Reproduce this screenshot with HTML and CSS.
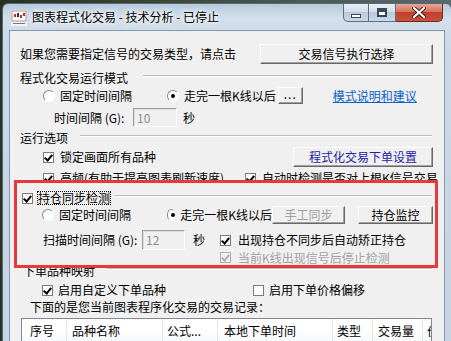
FILE: index.html
```html
<!DOCTYPE html>
<html lang="zh-CN">
<head>
  <meta charset="UTF-8">
  <title>图表程式化交易 - 技术分析 - 已停止</title>
  <link rel="stylesheet" href="styles.css">
</head>
<body>
  <div class="window">
    <div class="titlebar">
      <svg class="app-icon" width="16" height="16" viewBox="0 0 16 16">
        <rect x="0" y="0" width="16" height="16" fill="#f4f4f4"/>
        <rect x="1" y="1" width="14" height="10" fill="#fff" stroke="#9a9a9a" stroke-width="1"/>
        <rect x="3" y="4" width="2" height="3" fill="#d22"/>
        <rect x="6" y="3" width="2" height="4" fill="#333"/>
        <rect x="9" y="5" width="2" height="3" fill="#d22"/>
        <rect x="12" y="3" width="2" height="3" fill="#d22"/>
        <rect x="2" y="13" width="12" height="1" fill="#777"/>
      </svg>
      <span class="title">图表程式化交易 - 技术分析 - 已停止</span>
      <div class="caps">
        <div class="cap cap-min"><span class="min-glyph"></span></div>
        <div class="cap cap-max"><span class="max-glyph"></span></div>
        <div class="cap cap-close">
          <svg width="14" height="11" viewBox="0 0 14 11">
            <path d="M2 1 L12 10 M12 1 L2 10" stroke="#3a1a14" stroke-width="4" stroke-linecap="round"/>
            <path d="M2 1 L12 10 M12 1 L2 10" stroke="#fff" stroke-width="2.2" stroke-linecap="round"/>
          </svg>
        </div>
      </div>
    </div>

    <div class="client">
      <div class="row row-top">
        <span>如果您需要指定信号的交易类型，请点击</span>
        <div class="btn btn-signal">交易信号执行选择</div>
      </div>

      <div class="row group-title">
        <span>程式化交易运行模式</span>
        <span class="line line-wide"></span>
      </div>

      <div class="row row-mode">
        <label class="opt opt-first"><span class="radio"></span>固定时间间隔</label>
        <label class="opt"><span class="radio checked"></span>走完一根K线以后</label>
        <div class="btn btn-dots">...</div>
        <a class="link" href="#">模式说明和建议</a>
      </div>

      <div class="row row-interval">
        <span class="field-label">时间间隔 (G):</span>
        <div class="input">10</div>
        <span class="unit">秒</span>
      </div>

      <div class="row group-title">
        <span>运行选项</span>
        <span class="line"></span>
      </div>

      <div class="row row-lock">
        <label class="opt"><span class="check checked"></span>锁定画面所有品种</label>
        <div class="btn btn-order">程式化交易下单设置</div>
      </div>

      <div class="row row-freq">
        <label class="opt opt-freq"><span class="check checked"></span>高频(有助于提高图表刷新速度)</label>
        <label class="opt"><span class="check checked"></span>自动时检测是否对上根K信号交易</label>
      </div>

      <div class="row group-title row-sync">
        <span class="check checked"></span>
        <span class="focus">持仓同步检测</span>
        <span class="line line-tight"></span>
      </div>

      <div class="row row-sync-mode">
        <label class="opt opt-first"><span class="radio"></span>固定时间间隔</label>
        <label class="opt opt-bar"><span class="radio checked"></span>走完一根K线以后</label>
        <div class="btn btn-manual disabled">手工同步</div>
        <div class="btn btn-monitor">持仓监控</div>
      </div>

      <div class="row row-scan">
        <span class="field-label scan-label">扫描时间间隔 (G):</span>
        <div class="input input-scan">12</div>
        <span class="unit unit-scan">秒</span>
        <label class="opt"><span class="check checked"></span>出现持仓不同步后自动矫正持仓</label>
      </div>

      <div class="row row-stop">
        <label class="opt disabled"><span class="check checked"></span>当前K线出现信号后停止检测</label>
      </div>

      <div class="row group-title row-map">
        <span>下单品种映射</span>
        <span class="line"></span>
      </div>

      <div class="row row-custom">
        <label class="opt opt-custom"><span class="check checked"></span>启用自定义下单品种</label>
        <label class="opt"><span class="check"></span>启用下单价格偏移</label>
      </div>

      <div class="row row-note">
        <span>下面的是您当前图表程序化交易的交易记录：</span>
      </div>

      <div class="list">
        <div class="list-head">
          <div class="col col-no">序号</div>
          <div class="col col-name">品种名称</div>
          <div class="col col-formula">公式...</div>
          <div class="col col-time">本地下单时间</div>
          <div class="col col-type">类型</div>
          <div class="col col-qty">交易量</div>
          <div class="col col-price">价格</div>
        </div>
      </div>

      <div class="highlight"></div>
    </div>
  </div>
</body>
</html>
```

FILE: styles.css
```css
* {
  margin: 0;
  padding: 0;
  box-sizing: border-box;
}

body {
  width: 451px;
  height: 341px;
  overflow: hidden;
  background: linear-gradient(90deg, #27331f, #3d4a3a 40%, #5a6a6c);
  font-family: "Noto Sans CJK SC", "Noto Sans", sans-serif;
  font-size: 12px;
  line-height: 14px;
  color: #000;
}

.window {
  margin: 3px 0 0 2px;
  width: 450px;
  height: 338px;
  background: linear-gradient(#b8c9dc, #d3dfeb 14px, #cbd8e6 40px, #c6d4e3);
  border: 1px solid #55677d;
  border-bottom: none;
  border-radius: 6px 6px 0 0;
  overflow: hidden;
}

/* title bar */

.titlebar {
  height: 26px;
  display: flex;
  align-items: center;
  padding-left: 8px;
}

.app-icon {
  margin-right: 5px;
  margin-top: 1px;
}

.title {
  color: #000;
  font-size: 12px;
  text-shadow: 0 0 6px #fff, 0 0 4px #fff;
}

.caps {
  margin-left: auto;
  margin-right: 8px;
  align-self: flex-start;
  display: flex;
  height: 18px;
}

.cap {
  height: 18px;
  display: flex;
  align-items: center;
  justify-content: center;
  border: 1px solid #5d6f86;
  border-top: none;
  background: linear-gradient(#e8eef5, #d3deea 45%, #bccbdc 50%, #c9d7e6);
}

.cap-min {
  width: 26px;
  border-radius: 0 0 0 5px;
}

.cap-max {
  width: 27px;
  border-left: none;
}

.cap-close {
  width: 47px;
  border-left: none;
  border-color: #6a2a20;
  border-radius: 0 0 5px 0;
  background: linear-gradient(#e9a897, #d7725c 45%, #c2402a 50%, #c9503a);
}

.min-glyph {
  width: 10px;
  height: 4px;
  margin-top: 6px;
  background: #fff;
  border: 1px solid #38475a;
}

.max-glyph {
  width: 10px;
  height: 9px;
  border: 1px solid #38475a;
  border-top-width: 3px;
  background: #fff;
  box-shadow: inset 0 0 0 1px #38475a;
  background-clip: content-box;
  padding: 1px;
}

/* client area */

.client {
  position: relative;
  margin: 0 6px;
  height: 330px;
  background: #f0f0f0;
  border: 1px solid #8597ad;
}

.row {
  display: flex;
  align-items: center;
  white-space: nowrap;
}

.row-top {
  margin-top: 13px;
  height: 20px;
  padding-left: 10px;
}

.group-title {
  margin-top: 7px;
  height: 14px;
  padding: 0 12px 0 10px;
}

.line {
  flex: 1;
  height: 2px;
  margin: -4px 0 0 12px;
  border-top: 1px solid #bdbdbd;
  border-bottom: 1px solid #fff;
}

.line-wide {
  margin-left: 15px;
}

.line-tight {
  margin-left: 3px;
}

/* buttons */

.btn {
  display: flex;
  align-items: center;
  justify-content: center;
  background: #f0f0f0;
  border: 1px solid;
  border-color: #fff #696969 #696969 #fff;
  box-shadow: inset -1px -1px 0 #a0a0a0;
}

.btn.disabled {
  color: #a0a0a0;
}

.btn-signal {
  margin-left: auto;
  margin-right: 11px;
  width: 173px;
  height: 20px;
}

.btn-dots {
  margin-left: 2px;
  width: 25px;
  height: 17px;
  padding-bottom: 3px;
  letter-spacing: 1px;
}

.btn-order {
  margin-left: auto;
  margin-right: 11px;
  width: 140px;
  height: 20px;
  color: #2323a8;
}

.btn-manual {
  width: 73px;
  height: 18px;
}

.btn-monitor {
  margin-left: 13px;
  width: 75px;
  height: 18px;
}

.link {
  margin-left: 30px;
  color: #0a63c9;
  text-decoration: underline;
}

/* radios and checkboxes */

.opt {
  display: flex;
  align-items: center;
}

.radio {
  position: relative;
  width: 12px;
  height: 12px;
  margin-right: 5px;
  border-radius: 50%;
  background: #fff;
  border: 1px solid;
  border-color: #8a8a8a #fff #fff #8a8a8a;
}

.radio.checked::after {
  content: "";
  position: absolute;
  left: 3px;
  top: 3px;
  width: 4px;
  height: 4px;
  border-radius: 50%;
  background: #000;
}

.check {
  position: relative;
  flex: none;
  width: 11px;
  height: 11px;
  margin-right: 6px;
  background: #fff;
  border: 1px solid #7a7a7a;
}

.check.checked::after {
  content: "";
  position: absolute;
  left: 2px;
  top: 0;
  width: 3px;
  height: 6px;
  border: solid #000;
  border-width: 0 2px 2px 0;
  transform: rotate(40deg);
}

.opt.disabled {
  color: #a3a3a3;
}

.opt.disabled .check {
  background: #f0f0f0;
  border-color: #b0b0b0;
}

.opt.disabled .check::after {
  border-color: #b0b0b0;
}

/* inputs */

.input {
  display: flex;
  align-items: center;
  padding-left: 3px;
  background: #f0f0f0;
  color: #8c8c8c;
  border: 1px solid;
  border-color: #a0a0a0 #fff #fff #a0a0a0;
  box-shadow: inset 1px 1px 0 #dcdcdc;
}

.field-label {
  width: 79px;
}

.unit {
  margin-left: 6px;
}

/* rows */

.row-mode {
  margin-top: 2px;
  height: 17px;
  padding-left: 33px;
}

.opt-first {
  width: 124px;
}

.row-interval {
  margin-top: 4px;
  height: 19px;
  padding-left: 44px;
}

.row-interval .input {
  width: 44px;
  height: 19px;
}

.row-interval + .group-title {
  margin-top: 4px;
}

.row-lock {
  margin-top: 2px;
  height: 20px;
  padding-left: 33px;
}

.row-freq {
  margin-top: 4px;
  height: 9px;
  overflow: hidden;
  align-items: flex-start;
  padding-left: 33px;
}

.row-freq .check {
  margin-top: 1px;
}

.opt-freq {
  width: 202px;
}

.row-sync {
  margin-top: 11px;
  padding-left: 12px;
}

.row-sync .check {
  margin-right: 4px;
}

.focus {
  outline: 1px dotted #000;
  outline-offset: -1px;
  padding: 0 1px;
}

.row-sync-mode {
  margin-top: 1px;
  height: 18px;
  padding-left: 32px;
}

.row-sync-mode .opt-first {
  width: 125px;
}

.opt-bar {
  width: 105px;
}

.row-scan {
  margin-top: 6px;
  height: 20px;
  padding-left: 33px;
}

.scan-label {
  width: 99px;
}

.input-scan {
  width: 43px;
  height: 20px;
}

.unit-scan {
  margin-left: 8px;
  margin-right: 15px;
}

.row-scan .check,
.row-stop .check {
  margin-right: 7px;
}

.row-stop {
  margin-top: 1px;
  height: 13px;
  padding-left: 210px;
}

.row-map {
  margin-top: 0;
  padding-left: 13px;
}

.row-custom {
  margin-top: 5px;
  height: 14px;
  padding-left: 32px;
}

.row-custom .check {
  margin-right: 5px;
}

.opt-custom {
  width: 211px;
}

.row-note {
  margin-top: 3px;
  height: 14px;
  padding-left: 20px;
}

/* list view */

.list {
  margin: 4px 0 0 11px;
  width: 411px;
  height: 40px;
  background: #fff;
  border: 1px solid #828790;
  overflow: hidden;
}

.list-head {
  display: flex;
  height: 24px;
  background: linear-gradient(#fff, #fff 50%, #f7f8fa);
  border-bottom: 1px solid #d5d5d5;
}

.col {
  flex: none;
  display: flex;
  align-items: center;
  padding-left: 5px;
  border-right: 1px solid #e3e5e7;
  white-space: nowrap;
  overflow: hidden;
}

.col-no {
  width: 45px;
  padding-left: 8px;
}

.col-name {
  width: 96px;
}

.col-formula {
  width: 55px;
  padding-left: 4px;
}

.col-time {
  width: 115px;
  padding-left: 6px;
}

.col-type {
  width: 40px;
  padding-left: 4px;
}

.col-qty {
  width: 50px;
}

.col-price {
  width: 40px;
  padding-left: 4px;
  border-right: none;
}

/* red annotation box */

.highlight {
  position: absolute;
  left: 4px;
  top: 149px;
  width: 424px;
  height: 88px;
  border: 3px solid #e5393b;
  pointer-events: none;
}
```
